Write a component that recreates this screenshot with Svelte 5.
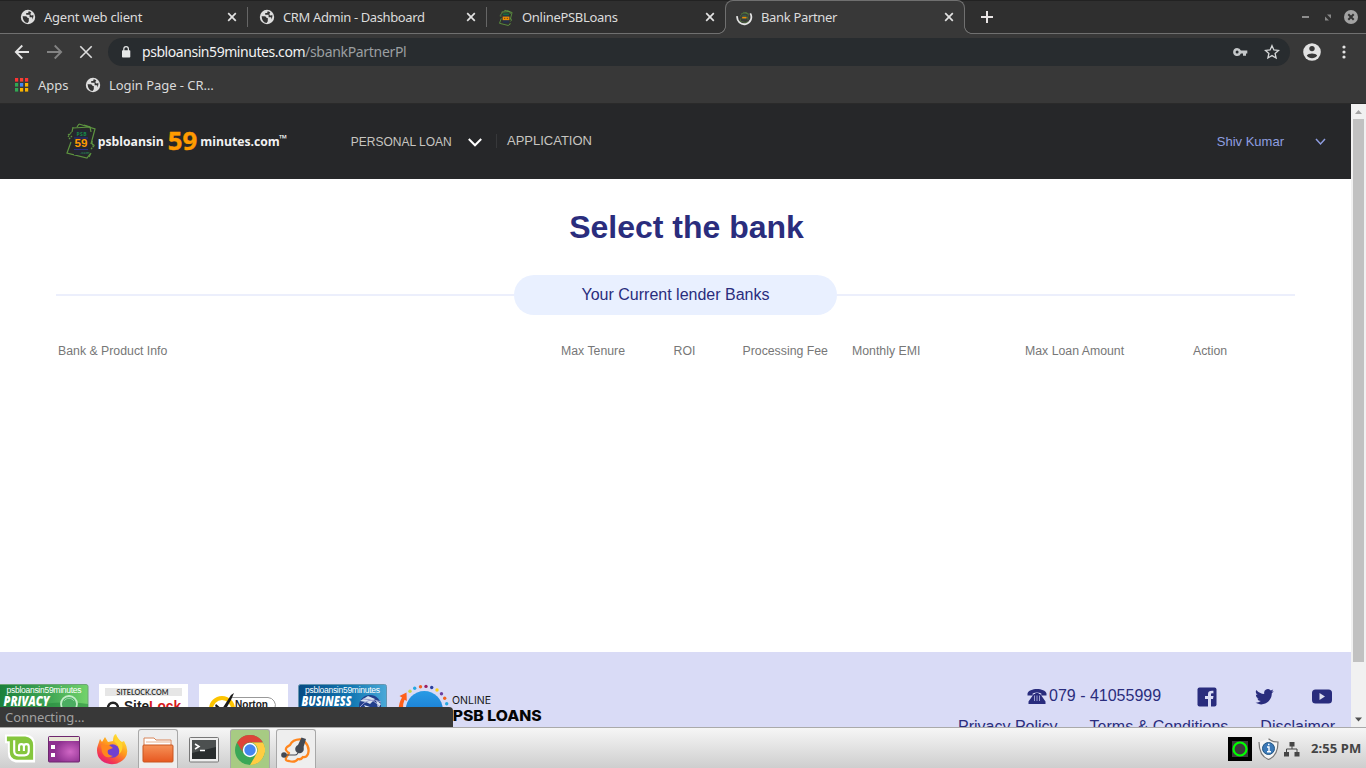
<script>
  const tabs = [
    { title: 'Agent web client', icon: 'globe', sep: true, ls: -0.22 },
    { title: 'CRM Admin - Dashboard', icon: 'globe', sep: true, ls: -0.38 },
    { title: 'OnlinePSBLoans', icon: 'psb', sep: false, ls: -0.3 },
    { title: 'Bank Partner', icon: 'load', active: true, ls: -0.33 }
  ];
  const columns = ['Bank & Product Info', 'Max Tenure', 'ROI', 'Processing Fee', 'Monthly EMI', 'Max Loan Amount', 'Action'];
  const dots = [
    [22, 7.5, '#c9d94a'], [26.7, 4.6, '#27a9e1'], [32.5, 3, '#f26522'], [38, 2.7, '#9b2063'], [43.7, 3.8, '#2a3f9d'],
    [49, 6.3, '#fbd116'], [53.5, 10, '#6b3fa0'], [56.7, 14.6, '#f26522'], [58.7, 20, '#27a9e1']
  ];
</script>

{#snippet globe()}
  <svg width="16" height="16" viewBox="0 0 16 16">
    <circle cx="8" cy="8" r="7.2" fill="#dedede" />
    <path d="M2.6 7.2H5.6Q7.4 7.2 7.6 9H8.8V12.2L7.6 14Q3 13.4 2.6 7.2ZM8.6 2.2 8.2 4H6.2V5.8H9.6V8.2H12.2V10.6Q14 8.6 13.3 5.8 12.6 6.6 10.9 6.3L10.3 4.9 11.3 3.4 9.8 2.4Z" fill="#333" />
  </svg>
{/snippet}

{#snippet cross(s)}
  <svg width={s} height={s} viewBox="0 0 10 10"><path d="M1.2 1.2 8.8 8.8M8.8 1.2 1.2 8.8" stroke="#e2e2e2" stroke-width={s > 10 ? 1.4 : 1.7} /></svg>
{/snippet}

{#snippet notes(w)}
  <g fill="none" stroke="#5d9440" stroke-width={w}>
    <path d="M6 5 23 4M24 30 22 34" /><path d="M6 4 5 9M12 1 28 6 24 21M12 1 10 4" /><path d="M4 19 0 30 20 35 23 31" /><path d="M17 2 23 4 24 9" />
    <path d="M1 12 5 9M2 16 5 13M1 14 3 11M24 20 28 23M24 26 27 23M25 18 26 24" stroke-dasharray="1.8 .8" />
  </g>
{/snippet}

<div class="screen">
  <div class="tabs">
    {#each tabs as t}
      <div class="tab" class:active={t.active} class:sep={t.sep}>
        <span class="fav">
          {#if t.icon === 'globe'}{@render globe()}
          {:else}
            <svg width="17" height="17" viewBox="0 0 17 17">
              {#if t.icon === 'load'}
                <path d="M1.2 7.2A7.1 7.1 0 1 0 14.3 4.4" fill="none" stroke="#e4e4e4" stroke-width="1.8" />
                <g transform="translate(4 2.9) scale(.31)">{@render notes(1.6)}<rect x="7" y="9" width="14" height="15" fill="#36564a" /><rect x="7" y="16" width="14" height="5" fill="#ed8c00" /></g>
              {:else}
                <g transform="translate(1.5 .8) scale(.45)">{@render notes(2)}<rect x="8" y="9" width="13" height="20" fill="#22304d" /><rect x="8" y="8" width="13" height="4" fill="#176b3d" /><rect x="7" y="15" width="15" height="8" fill="#ed8c00" /><path d="M10 19H13M16 19H19" stroke="#613d1a" stroke-width="2" /></g>
              {/if}
            </svg>
          {/if}
        </span>
        <span class="title" style="letter-spacing:{t.ls}px">{t.title}</span>
        <span class="x">{@render cross(10)}</span>
      </div>
    {/each}
    <svg class="plus" width="12" height="12" viewBox="0 0 12 12"><path d="M6 0V12M0 6H12" stroke="#e8e4e4" stroke-width="2" /></svg>
    <svg class="winctl" width="60" height="18" viewBox="0 0 60 18">
      <path d="M4 9H11" stroke="#999" stroke-width="1.8" />
      <path d="M29 6.5H33V10.5ZM27 8.5V12.5H31Z" fill="#888" />
      <circle cx="53" cy="9" r="7" fill="#a3a3a3" /><path d="M50.3 6.3 55.7 11.7M55.7 6.3 50.3 11.7" stroke="#333" stroke-width="2" />
    </svg>
  </div>

  <div class="toolbar">
    <svg class="nav" width="100" height="20" viewBox="0 0 100 20" fill="none" stroke-width="1.8">
      <path d="M21 10H8M14.3 3.5 7.8 10 14.3 16.5" stroke="#e4e4e4" />
      <path d="M39 10H53M46.7 3.5 53.2 10 46.7 16.5" stroke="#838383" />
      <path d="M72.3 4.3 83.7 15.7M83.7 4.3 72.3 15.7" stroke="#dedede" stroke-width="1.6" />
    </svg>
    <div class="address">
      <svg width="10" height="12" viewBox="0 0 10 12"><rect x="1" y="4.3" width="8.3" height="7.2" rx=".8" fill="#e6e8e8" /><path d="M2.8 5V3A2.3 2.3 0 0 1 7.4 3V5" fill="none" stroke="#e6e8e8" stroke-width="1.2" /></svg>
      <span class="url">psbloansin59minutes.com<i>/sbankPartnerPl</i></span>
      <svg class="key" width="15" height="10" viewBox="0 0 15 10"><path d="M4.1 1A4 4 0 1 0 7.9 6.4H10V8.8H13V6.4H14.3V3.6H7.9A4 4 0 0 0 4.1 1ZM4.1 3.5A1.5 1.5 0 1 1 4.1 6.5 1.5 1.5 0 0 1 4.1 3.5" fill="#c5c8ca" fill-rule="evenodd" /></svg>
      <svg width="16" height="16" viewBox="0 0 16 16"><path d="M8 1.7 9.9 5.9 14.5 6.4 11.1 9.4 12.1 14 8 11.6 3.9 14 4.9 9.4 1.5 6.4 6.1 5.9Z" fill="none" stroke="#d6d8d9" stroke-width="1.3" /></svg>
    </div>
    <svg class="user" width="18" height="18" viewBox="0 0 18 18"><circle cx="9" cy="9" r="8.8" fill="#e2e2e2" /><circle cx="9" cy="5.6" r="2.7" fill="#383838" /><path d="M3.8 12.5C5 9.8 13 9.8 14.2 12.5 12 16 6 16 3.8 12.5Z" fill="#383838" /></svg>
    <svg class="dots" width="4" height="14" viewBox="0 0 4 14" fill="#e2e2e2"><circle cx="2" cy="2" r="1.6" /><circle cx="2" cy="7" r="1.6" /><circle cx="2" cy="12" r="1.6" /></svg>
  </div>

  <div class="bookmarks">
    <svg width="14" height="14" viewBox="0 0 14 14">
      {#each ['#f33', '#f44336', '#f33', '#31a853', '#4285f4', '#fbb400', '#31a853', '#fbb400', '#fbb400'] as c, i}
        <rect x={(i % 3) * 5} y={Math.floor(i / 3) * 5} width="3.2" height="3.6" fill={c} />
      {/each}
    </svg>
    <span class="apps">Apps</span>
    {@render globe()}
    <span class="login">Login Page - CR…</span>
  </div>

  <div class="view">
    <div class="page">
      <header>
        <svg class="logo" width="224" height="40" viewBox="0 0 224 40">
          <g transform="translate(1 1)">{@render notes(1.2)}</g>
          <rect x="8" y="8" width="14" height="25" fill="#242631" />
          <text x="10.5" y="13.5" class="os" font-size="5" textLength="10" fill="#168a48">PSB</text>
          <path d="M8 16H22M8 27.5H22" stroke="#2b2e83" stroke-width="1" />
          <text x="8.5" y="25.3" font-family="Liberation Sans" font-weight="700" font-size="10.5" textLength="13" lengthAdjust="spacingAndGlyphs" fill="#ff9b00">59</text>
          <text x="14" y="32" class="os" font-size="4" fill="#26734a">.com</text>
          <text x="31.8" y="24" class="os" font-size="12.5" textLength="66" lengthAdjust="spacingAndGlyphs" fill="#f2f2f2">psbloansin</text>
          <text x="101.7" y="27.8" class="os" font-size="25" textLength="29.5" lengthAdjust="spacingAndGlyphs" fill="#ff9b00" stroke="#ff9b00" stroke-width=".4">59</text>
          <text x="134.3" y="24" class="os" font-size="12.5" textLength="79.5" lengthAdjust="spacingAndGlyphs" fill="#f2f2f2">minutes.com</text>
          <text x="213" y="20" class="os" font-size="9.5" textLength="8" lengthAdjust="spacingAndGlyphs" fill="#fff">™</text>
        </svg>
        <span class="pl">PERSONAL LOAN</span>
        <svg class="chev" width="14" height="9" viewBox="0 0 14 9"><path d="M.8 1 7 7.3 13.2 1" fill="none" stroke="#fff" stroke-width="2" /></svg>
        <span class="application">APPLICATION</span>
        <span class="name">Shiv Kumar</span>
        <svg width="11" height="8" viewBox="0 0 11 8"><path d="M1 1 5.5 6 10 1" fill="none" stroke="#8f9de0" stroke-width="1.5" /></svg>
      </header>
      <main>
        <h1>Select the bank</h1>
        <div class="divider"><span>Your Current lender Banks</span></div>
        <div class="cols">{#each columns as c}<span>{c}</span>{/each}</div>
      </main>
      <footer>
        <div class="badges">
          <svg width="89" height="44" viewBox="0 0 89 44">
            <defs><linearGradient id="gr"><stop offset="0" stop-color="#197f3b" /><stop offset=".6" stop-color="#43a956" /><stop offset="1" stop-color="#73d46b" /></linearGradient></defs>
            <rect x="-2" y=".5" width="90" height="50" rx="2" fill="url(#gr)" stroke="#6da675" /><path d="M0 26C25 24 50 15 88 20V44H0Z" fill="#24863d" opacity=".55" />
            <text x="6.5" y="9" class="small" textLength="75">psbloansin59minutes</text>
            <text x="3.5" y="21.5" class="badge" textLength="46" lengthAdjust="spacingAndGlyphs">PRIVACY</text>
            <circle cx="69" cy="20" r="8" fill="#4bad61" stroke="#c3edc8" stroke-width="1.8" /><path d="M64 17A6 6 0 0 1 74 17M74 26 80 32" fill="none" stroke="#91d69f" />
          </svg>
          <svg width="89" height="44" viewBox="0 0 89 44">
            <rect width="89" height="44" fill="#fff" /><rect x="6" y="4" width="77" height="8" fill="#e6e6e6" />
            <text x="17.5" y="10.8" font-family="Lato" font-weight="700" font-size="8" textLength="52" lengthAdjust="spacingAndGlyphs" fill="#333">SITELOCK.COM</text>
            <path d="M9 25C8 16.5 20 16.5 19 25" fill="none" stroke="#222" stroke-width="2.5" />
            <text y="27" x="25" font-family="Liberation Sans" font-weight="700" font-size="14" textLength="57" lengthAdjust="spacingAndGlyphs" fill="#222">Site<tspan fill="#d71920">Lock</tspan></text>
          </svg>
          <svg width="89" height="44" viewBox="0 0 89 44">
            <rect width="89" height="44" fill="#fff" />
            <path d="M32 13.5H69A8 8 0 0 1 76 24" fill="none" stroke="#999" />
            <circle cx="23" cy="25" r="11" fill="none" stroke="#fdc400" stroke-width="4" />
            <path d="M17 20 23 25 32 11 35 9 32 16 24 30 16 22Z" fill="#1b1b1b" />
            <text x="36" y="24" font-family="Liberation Sans" font-weight="700" font-size="11" textLength="33" lengthAdjust="spacingAndGlyphs" fill="#222">Norton</text>
          </svg>
          <svg width="89" height="44" viewBox="0 0 89 44">
            <defs><linearGradient id="bl"><stop offset="0" stop-color="#064b83" /><stop offset=".6" stop-color="#1177b3" /><stop offset="1" stop-color="#4aa9d8" /></linearGradient></defs>
            <rect x=".5" y=".5" width="88" height="50" rx="2" fill="url(#bl)" stroke="#6695b0" />
            <text x="7" y="9" class="small" textLength="75">psbloansin59minutes</text>
            <text x="3.5" y="21.5" class="badge" textLength="50" lengthAdjust="spacingAndGlyphs">BUSINESS</text>
            <circle cx="72" cy="22" r="11" fill="#223f8c" /><path d="M62 17 70 12 77 15 72 20 68 18ZM78 16 83 20 80 24ZM66 21 72 23 69 26Z" fill="#d8e3ef" /><path d="M61 24Q70 12 83 18M65 15Q78 15 82 24" fill="none" stroke="#9b9fd0" />
          </svg>
          <svg class="online" width="158" height="44" viewBox="0 0 158 44">
            {#each dots as d}<circle cx={d[0]} cy={d[1] - 0.3} r="1.7" fill={d[2]} />{/each}
            <defs><linearGradient id="ball" x2="0" y2="1"><stop offset="0" stop-color="#289be5" /><stop offset="1" stop-color="#1269c8" /></linearGradient></defs>
            <circle cx="36.3" cy="25.5" r="18.5" fill="url(#ball)" /><path d="M10.5 26Q11 18 14 13.5L11.5 12 18.5 8.5 18.8 17 16.5 15.8Q14.5 20 15 26Z" fill="#ff601b" />
            <text x="64" y="19.5" font-family="Inter" font-size="10.5" textLength="39" lengthAdjust="spacingAndGlyphs" fill="#171717">ONLINE</text>
            <text x="64.7" y="36.8" font-family="Inter" font-weight="800" font-size="14.5" textLength="89" lengthAdjust="spacingAndGlyphs" fill="#050505">PSB LOANS</text>
          </svg>
        </div>
        <div class="contact">
          <div class="phone">
            <svg width="20" height="17" viewBox="0 0 20 17"><path d="M.5 7.5V5.5C2-.5 18-.5 19.5 5.5V7.5H14.3V5.5Q10 3.7 5.7 5.5V7.5ZM6.8 6H8.3V4.9H11.7V6H13.2L18.5 13.5V16H1.5V13.5Z" fill="#292c7d" /><path d="M7.5 7.5V13M10 7.5V13M12.5 7.5V13" stroke="#babbe5" stroke-width=".8" /></svg>
            <span>079 - 41055999</span>
            <svg class="fb" width="20" height="20" viewBox="0 0 20 20"><rect x=".5" y=".5" width="19" height="19" rx="2" fill="#292c7d" /><path d="M11 20V12H8V9H11V7C11 4.5 12.8 3.4 16.4 3.8V6.4C14.4 6.2 14 6.6 14 7.6V9H16.5L16 12H14V20Z" fill="#daddf6" /></svg>
            <svg class="tw" width="19" height="16" viewBox="0 0 19 16"><path d="M18.7 2A7 7 0 0 1 16.5 2.6 4 4 0 0 0 18.2.6 8 8 0 0 1 15.8 1.4 3.8 3.8 0 0 0 9.3 5 11 11 0 0 1 1.4 1 3.8 3.8 0 0 0 2.6 6 4 4 0 0 1 .9 5.5 3.8 3.8 0 0 0 3.9 9.3 4 4 0 0 1 2.2 9.4 3.8 3.8 0 0 0 5.8 12 8 8 0 0 1 .3 13.6C8 18.4 16.9 13 16.8 4.2A8 8 0 0 0 18.7 2Z" fill="#292c7d" /></svg>
            <svg class="yt" width="20" height="15" viewBox="0 0 20 15"><rect y=".5" width="20" height="14" rx="3.5" fill="#292c7d" /><path d="M7.5 4 13 7.5 7.5 11Z" fill="#dde" /></svg>
          </div>
          <div class="links"><span>Privacy Policy</span><span>Terms &amp; Conditions</span><span>Disclaimer</span></div>
        </div>
      </footer>
      <div class="status">Connecting…</div>
    </div>
    <div class="scroll">
      <svg width="15" height="15" viewBox="0 0 15 15"><path d="M4 10 7.5 6 11 10Z" fill="#a3a3a3" /></svg>
      <div class="thumb"></div>
      <svg width="15" height="15" viewBox="0 0 15 15"><path d="M4 5.5 7.5 9.5 11 5.5Z" fill="#505050" /></svg>
    </div>
  </div>

  <div class="taskbar">
    <svg class="mint" width="34" height="32" viewBox="0 0 34 32"><path d="M1 1H23Q32 2 32 11V30H12Q4 28 4 20V10H1Z" fill="#fff" /><path d="M3 3H22Q30 4 30 12V27H13Q6 26 6 19V8H3Z" fill="#85c63d" /><path d="M10.5 7V18Q10.5 22.5 15 22.5H21Q25.5 22.5 25.5 18V13.5Q25.5 11 23 11T20.5 13.5V18M20.5 13.5Q20.5 11 18 11T15.5 13.5V18" fill="none" stroke="#fff" stroke-width="2.2" /></svg>
    <svg class="desk" width="32" height="27" viewBox="0 0 32 27"><defs><radialGradient id="pu" cx=".7" cy=".6"><stop offset="0" stop-color="#d067c5" /><stop offset="1" stop-color="#8e3090" /></radialGradient></defs><rect x=".5" y=".5" width="31" height="25.5" rx="1" fill="url(#pu)" stroke="#6e266e" /><rect x="1" y="1" width="30" height="4" fill="#e7e5d6" /><rect x="3" y="9" width="4" height="4" fill="#fff" /><rect x="3" y="17" width="4" height="4" fill="#fff" /></svg>
    <svg class="fox" width="32" height="32" viewBox="0 0 32 32"><defs><linearGradient id="fx" x1=".8" y1="0" x2=".2" y2="1"><stop offset="0" stop-color="#fff13d" /><stop offset=".45" stop-color="#ff981c" /><stop offset=".8" stop-color="#f43752" /><stop offset="1" stop-color="#db1b83" /></linearGradient></defs><path d="M2 12 4 6 6 9 9 4 12 9 17 8Q17 2 20 1 22 7 26 9L28 8Q34 18 29 25C22 34 7 33 2 23Q0 17 2 12Z" fill="url(#fx)" /><circle cx="16.5" cy="18" r="6.8" fill="#7040cf" /><path d="M5 12 13 12 17 15 12 17Q10 22 17 23 9 27 6 19Z" fill="#ff871d" /><path d="M18 8Q25 14 23 21 28 17 26 10L20 3Z" fill="#ffd42d" /></svg>
    <div class="slot folder"><svg width="32" height="27" viewBox="0 0 32 27"><defs><linearGradient id="fo" x2="0" y2="1"><stop offset="0" stop-color="#f69258" /><stop offset="1" stop-color="#e75820" /></linearGradient></defs><path d="M2 15V2H12L14 4H29V15" fill="#fff" stroke="#d8865a" /><path d="M4 6H28" stroke="#e7b392" /><rect x="1" y="9" width="30" height="17" rx="1" fill="url(#fo)" stroke="#c85620" /></svg></div>
    <svg class="term" width="30" height="26" viewBox="0 0 30 26"><rect x=".5" y=".5" width="29" height="24.5" rx="1" fill="#eee" stroke="#777" /><rect x="3" y="3" width="24" height="19" fill="#292d2e" /><path d="M3 3H27V10L3 16Z" fill="#4c5050" /><path d="M6 7 10 9.5 6 12M11 13.5H16" fill="none" stroke="#fff" stroke-width="1.5" /></svg>
    <div class="slot green"><svg width="30" height="30" viewBox="0 0 30 30"><circle cx="15" cy="15" r="15" fill="#3ba757" /><path d="M2 7.5A15 15 0 0 1 28 7.5H15A7.5 7.5 0 0 0 8.5 18.8Z" fill="#dd4438" /><path d="M28 7.5A15 15 0 0 1 15 30L21.5 18.8A7.5 7.5 0 0 0 15 7.5Z" fill="#ffcd42" /><circle cx="15" cy="15" r="7.2" fill="#fff" /><circle cx="15" cy="15" r="5.7" fill="#4486ef" /></svg></div>
    <div class="slot zoi"><svg width="32" height="30" viewBox="0 0 32 30"><path d="M6 23 9 18Q4 15 7 12L10 10Q13 4 21 4.5L25 7Q30 12 28 19 26 23 23 22 21 25 18 24 15 28 9 26 5 26 6 23Z" fill="none" stroke="#ff861e" stroke-width="2.3" stroke-linejoin="round" /><path d="M4 20H15Q18 20 19 15" fill="none" stroke="#444953" stroke-width="1.2" /><circle cx="4" cy="20" r="2.8" fill="#444953" /><circle cx="19.5" cy="14" r="4.3" fill="#444953" /><path d="M18 10 21.5 2.5 26 4 23 14Z" fill="#444953" /></svg></div>
    <div class="grow"></div>
    <svg width="24" height="24" viewBox="0 0 24 24"><rect width="24" height="24" /><rect x="4" y="4" width="16" height="16" fill="#3c3c3c" /><circle cx="12" cy="12" r="6.5" fill="none" stroke="#0f0" stroke-width="2.2" /></svg>
    <svg class="shield" width="21" height="22" viewBox="0 0 21 22"><path d="M10.5 .8Q14 4 20 4C20 13 17 19 10.5 21.5 4 19 1 13 1 4 7 4 10.5.8Z" fill="#f5f5f5" stroke="#777" stroke-width="1.2" /><circle cx="10.5" cy="10.5" r="6" fill="#3a78b7" stroke="#235784" /><path d="M9 9H11V13.5M9 13.7H13M10 6.5H11.5" fill="none" stroke="#fff" stroke-width="1.4" /></svg>
    <svg class="net" width="16" height="16" viewBox="0 0 16 16" fill="#464646"><rect x="5.5" y="1" width="5" height="4.5" /><rect x="0" y="11" width="5" height="4.5" /><rect x="10.5" y="11" width="5" height="4.5" /><path d="M8 5V8M2.5 11V8H13V11" fill="none" stroke="#464646" stroke-width="1" /></svg>
    <span class="clock">2:55 PM</span>
  </div>
</div>

<style>
  :global(body) { overflow: hidden; background: #fff; }
  .screen { width: 1366px; height: 768px; display: flex; flex-direction: column; font-family: "Noto Sans", "Open Sans", sans-serif; overflow: hidden; }
  svg { display: block; flex: none; }
  span { white-space: nowrap; }
  .os { font-family: "Open Sans", sans-serif; font-weight: 700; }
  .tabs { box-sizing: border-box; height: 34px; flex: none; display: flex; align-items: center; padding-left: 9px; background: #2f2f2f; border-bottom: 1px solid #707070; border-top: 1px solid #222; }
  .tab { box-sizing: border-box; position: relative; width: 239px; height: 32px; display: flex; align-items: center; padding: 0 11px; color: #dcdcdc; font-size: 13px; }
  .tab.sep::after { content: ""; position: absolute; right: 0; top: 6px; height: 20px; width: 1px; background: #666; }
  .fav { width: 24px; }
  .title { flex: 1; }
  .active { width: 240px; height: 34px; margin: -1px 0 -1px -1px; border: 1px solid #707070; border-bottom: 0; border-radius: 8px 8px 0 0; background: #383838; padding: 0 10px 1px 10px; align-self: flex-start; }
  .active .fav { width: 25px; }
  .active::before, .active::after { content: ""; position: absolute; bottom: 0; left: -8px; width: 8px; height: 8px; background: radial-gradient(circle at 0 0, #2f2f2f 6.6px, #707070 7.2px, #707070 7.6px, #383838 8.2px); }
  .active::after { left: auto; right: -8px; background: radial-gradient(circle at 100% 0, #2f2f2f 6.6px, #707070 7.2px, #707070 7.6px, #383838 8.2px); }
  .plus { margin-left: 16px; }
  .winctl { margin: 0 8px 0 auto; }
  .toolbar { height: 36px; flex: none; display: flex; align-items: center; background: #383838; }
  .nav { margin-left: 8px; width: 100px; }
  .address { box-sizing: border-box; display: flex; align-items: center; width: 1182px; height: 28px; border-radius: 14px; background: #282c2f; padding: 0 10px 0 13px; }
  .url { margin: -2px 0 0 11px; font-size: 14px; color: #f1f1f1; letter-spacing: -.44px; flex: 1; }
  .url i { font-style: normal; color: #9b9fa1; letter-spacing: -.32px; }
  .key { margin-right: 16px; }
  .user { margin-left: 13px; }
  .dots { margin-left: 21px; }
  .bookmarks { height: 34px; flex: none; box-sizing: border-box; background: #383838; border-bottom: 1px solid #2a2a2a; display: flex; align-items: center; padding: 0 0 3px 15px; font-size: 13px; color: #dadada; }
  .apps { margin: 0 16px 0 9px; width: 31px; }
  .login { margin-left: 8px; letter-spacing: -.05px; }
  .view { height: 623px; flex: none; display: flex; }
  .page { position: relative; width: 1351px; display: flex; flex-direction: column; background: #fff; font-family: "Liberation Sans", Arial, sans-serif; overflow: hidden; }
  header { box-sizing: border-box; height: 75px; flex: none; display: flex; align-items: center; background: #262729; color: #c7c5c0; padding: 0 25px 0 66px; font-size: 13px; }
  .logo { width: 224px; }
  .pl { margin-left: 60.8px; width: 116.8px; font-size: 12px; }
  .chev { margin-top: 2px; }
  .application { margin-left: 14.4px; padding-left: 10px; border-left: 1px solid #37383a; line-height: 14px; margin-bottom: 1px; }
  .name { margin: 0 31px 0 auto; color: #8f9fe0; }
  main { height: 473px; flex: none; display: flex; flex-direction: column; align-items: center; color: #2a2d7d; }
  h1 { margin: 29px 0 0; padding-left: 22px; font-size: 32px; line-height: 38px; }
  .divider { width: 1239px; height: 40px; margin: 29px 0 0; display: flex; align-items: center; }
  .divider::before { content: ""; width: 458px; height: 2px; background: #eceffc; }
  .divider::after { content: ""; flex: 1; height: 2px; background: #eceffc; }
  .divider span { width: 323px; height: 40px; line-height: 40px; border-radius: 20px; background: #e9f0ff; text-align: center; font-size: 16px; }
  .cols { width: 1235px; margin-top: 29px; display: grid; grid-template-columns: 503px 112.5px 69px 109.5px 173px 168px auto; color: #777; font-size: 12.3px; line-height: 14px; }
  footer { height: 75px; flex: none; box-sizing: border-box; display: flex; justify-content: space-between; background: #d9dbf6; padding: 32px 16px 0 0; color: #2a2d7d; font-size: 16px; }
  .badges { display: flex; gap: 10.3px; height: 43px; }
  .online { margin-left: -9.2px; }
  .small { font-family: "Liberation Sans", sans-serif; font-size: 8.5px; fill: #fff; }
  .badge { font-family: "Open Sans", sans-serif; font-size: 13.5px; font-weight: 800; font-style: italic; fill: #fff; }
  .phone { display: flex; align-items: center; height: 24px; padding-left: 69px; }
  .phone span { margin-left: 2px; width: 113px; }
  .fb { margin: 1px 0 0 35px; }
  .tw { margin: 1px 0 0 38px; }
  .yt { margin: 1px 0 0 38px; }
  .links { display: flex; justify-content: space-between; margin-top: 9px; line-height: 20px; width: 377px; }
  .status { position: absolute; left: 0; bottom: 0; box-sizing: border-box; width: 453px; height: 20px; padding-left: 5px; border-top-right-radius: 4px; background: #383838; color: #a1a1a1; font: 13px/20px "Noto Sans", sans-serif; letter-spacing: -.06px; }
  .scroll { width: 15px; background: #f1f1f1; display: flex; flex-direction: column; align-items: center; }
  .thumb { width: 11px; height: 543px; margin-bottom: auto; background: #c1c1c1; }
  .taskbar { height: 41px; box-sizing: border-box; flex: none; display: flex; align-items: center; padding: 2px 4px 0; border-top: 1px solid #aaa; background: linear-gradient(#f6f6f6, #cecece); }
  .mint { width: 33px; }
  .desk { margin-left: 11px; }
  .fox { margin-left: 16px; }
  .slot { box-sizing: border-box; width: 40px; height: 40px; display: flex; justify-content: center; align-items: center; border: 1px solid #a8a8a8; border-bottom: 0; border-radius: 3px 3px 0 0; background: #eee; }
  .folder { margin-left: 10px; }
  .term { margin: 2px 0 0 11px; }
  .green { margin-left: 11px; background: #a7cb83; }
  .zoi { margin-left: 6px; }
  .grow { flex: 1; }
  .shield { margin-left: 6px; margin-top: -1px; }
  .net { margin-left: 5px; margin-top: -1px; }
  .clock { width: 51px; margin: -2px 0 0 11px; font-weight: 700; font-size: 13px; letter-spacing: .1px; color: #444; }
</style>
